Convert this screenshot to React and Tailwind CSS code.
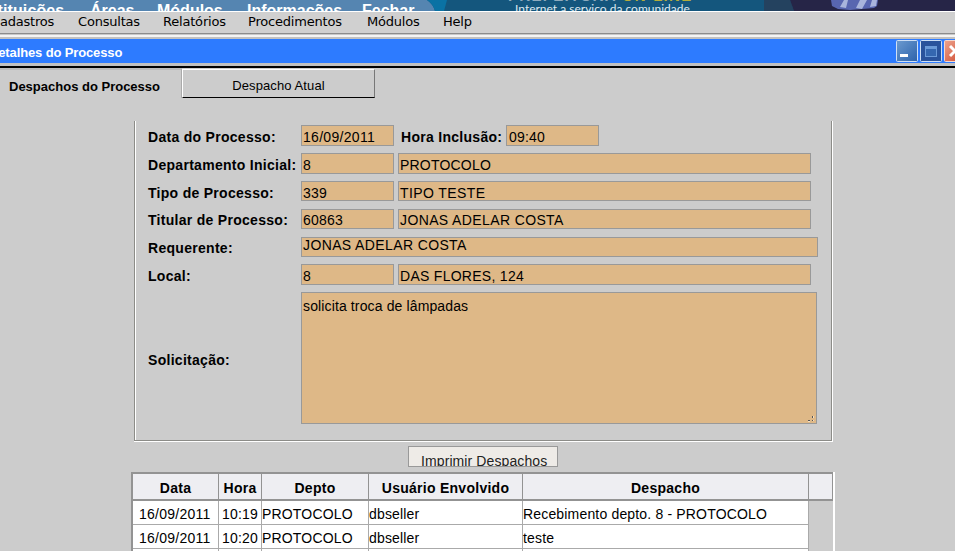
import React from "react";

const banner = [
  ["w-[116px]", "Instituições", "-ml-[26px] tracking-[0.12px]"],
  ["w-[67px]", "Áreas", ""],
  ["w-[90px]", "Módulos", ""],
  ["w-[115px]", "Informações", ""],
  ["w-[80px]", "Fechar", ""],
];

function Field({ children, className = "", tracking = "tracking-[0.2px]" }) {
  return (
    <div className={"shrink-0 overflow-hidden whitespace-nowrap border border-[#999] bg-[#deb887] text-[14px] " + tracking + " " + className}>
      {children}
    </div>
  );
}

function Label({ children, className = "" }) {
  return <div className={"shrink-0 whitespace-nowrap text-[14px] font-bold tracking-[0.29px] " + className}>{children}</div>;
}

function Banner() {
  return (
    <div className="relative h-[11px] overflow-hidden bg-[#12557c]">
      <svg className="absolute inset-0" width="955" height="11" viewBox="0 0 955 11">
        <rect width="955" height="11" fill="#14567d" />
        <path d="M0 0H427Q433 4 435 11H0Z" fill="#5585b1" />
        <path d="M427 0H447L444 11H435Q433 4 427 0Z" fill="#0a72a4" />
        <path d="M764 0H790L794 11H764Z" fill="#24425f" />
        <path d="M790 0H955V11H794Z" fill="#262547" />
        <path d="M831 0H878L877 6L874 8L862 9L850 10L838 9L832 6Z" fill="#5866b0" />
        <path d="M840 7L844 0H848L846 8Z M856 8L860 0H867L862 9Z M870 7L872 0H877L876 6Z" fill="#a9b5dc" />
      </svg>
      <div className="relative flex h-[11px] text-[16px] font-bold leading-[18px] text-white">
        <div className="flex pt-[2px]">
          {banner.map(([w, t, m]) => (
            <div key={t} className={w + " " + m + " shrink-0 whitespace-nowrap"}>{t}</div>
          ))}
        </div>
      </div>
      <div className="absolute left-[508px] top-[-12px] whitespace-nowrap text-[15px] font-bold leading-[15px] tracking-[1.3px] text-[#8fabbd]">
        PREFEITURA <span className="text-[#b5ad3c]">ON-LINE</span>
      </div>
      <div className="absolute left-[515px] top-[2px] whitespace-nowrap font-['Lato'] text-[12px] leading-[14px] text-[#dce8f0]">
        Internet a serviço da comunidade
      </div>
    </div>
  );
}

function WindowButtons() {
  return (
    <svg className="h-6 w-[60px] shrink-0" viewBox="895 39 60 24">
      <defs>
        <linearGradient id="min" x1="0" y1="0" x2="1" y2="1">
          <stop offset="0" stopColor="#6c9bd0" />
          <stop offset="1" stopColor="#2c62ab" />
        </linearGradient>
        <linearGradient id="cls" x1="0" y1="0" x2="1" y2="1">
          <stop offset="0" stopColor="#eda58f" />
          <stop offset="1" stopColor="#cf452a" />
        </linearGradient>
      </defs>
      <rect x="896.5" y="40.5" width="21" height="21" rx="1" fill="url(#min)" stroke="#cfe0f5" />
      <rect x="900" y="54" width="8" height="3" fill="#fff" />
      <rect x="920.5" y="40.5" width="21" height="21" rx="1" fill="#2a539c" stroke="#cfe0f5" />
      <rect x="925.5" y="46.5" width="11" height="10" fill="#3567b0" stroke="#6b9ad8" />
      <rect x="925" y="46" width="12" height="3" fill="#6b9ad8" />
      <rect x="944.5" y="40.5" width="21" height="21" rx="1" fill="url(#cls)" stroke="#f5d8d0" />
      <path d="M950 46L960 56M960 46L950 56" stroke="#fff" strokeWidth="3" />
    </svg>
  );
}

const menu = [
  ["w-[87px]", "Cadastros"],
  ["w-[85px]", "Consultas"],
  ["w-[85px]", "Relatórios"],
  ["w-[119px]", "Procedimentos"],
  ["w-[76px]", "Módulos"],
  ["w-[50px]", "Help"],
];

const rows = [
  ["16/09/2011", "10:19", "PROTOCOLO", "dbseller", "Recebimento depto. 8 - PROTOCOLO"],
  ["16/09/2011", "10:20", "PROTOCOLO", "dbseller", "teste"],
  ["", "", "", "", ""],
];

export default function App() {
  return (
    <div className="h-[551px] w-[955px] overflow-hidden bg-[#ccc] font-['Liberation_Sans',Arial,sans-serif] text-black">
      <Banner />
      <div className="h-[23px] border-b border-t border-b-[#8c8c8c] border-t-white bg-[#d0d0d0]">
        <div className="-ml-[9px] flex font-['DejaVu_Sans',sans-serif] text-[13px] leading-[19px] tracking-[-0.2px]">
          {menu.map(([w, t]) => (
            <div key={t} className={w + " shrink-0 whitespace-nowrap"}>{t}</div>
          ))}
        </div>
      </div>
      <div className="h-px bg-[#c8c8c8]" />
      <div className="h-[2px] bg-[#f4f4f4]" />
      <div className="h-[2px] bg-[#c0c0c0]" />
      <div className="flex h-6 justify-between bg-[#2d7bff]">
        <div className="-ml-[11px] whitespace-nowrap text-[13px] font-bold leading-[27px] tracking-[-0.13px] text-white">Detalhes do Processo</div>
        <WindowButtons />
      </div>
      <div className="h-[3px] bg-[#c0c0c0]" />
      <div className="h-[2px] bg-black" />
      <div className="flex h-[30px]">
        <div className="h-[30px] w-[182px] shrink-0 border-r border-t-2 border-r-[#aaa] border-t-[#bbb] pl-[9px] text-[13px] font-bold leading-[34px]">
          Despachos do Processo
        </div>
        <div className="mt-px h-[29px] w-[193px] border border-b-black border-l-white border-r-[#777] border-t-white text-center text-[13px] leading-[31px] tracking-[0.1px]">
          Despacho Atual
        </div>
      </div>

      <div className="ml-[134px] mt-[23px] flex h-[321px] w-[699px] border-b border-r border-white">
        <div className="flex h-[320px] w-[698px] border-x border-b border-[#8c8c88]">
          <div className="flex h-[319px] w-[696px] flex-col border-l border-white pl-[12px] pt-1">
            <div className="flex h-7 shrink-0">
              <Label className="w-[153px] leading-[25px]">Data do Processo:</Label>
              <Field tracking="tracking-[0.3px]" className="h-[21px] w-[93px] pl-px leading-[23px]">16/09/2011</Field>
              <Label className="ml-[7px] w-[105px] leading-[25px]">Hora Inclusão:</Label>
              <Field className="h-[21px] w-[93px] pl-[2px] leading-[23px]">09:40</Field>
            </div>
            <div className="flex h-7 shrink-0">
              <Label className="w-[153px] leading-[25px]">Departamento Inicial:</Label>
              <Field className="h-[21px] w-[93px] pl-px leading-[23px]">8</Field>
              <Field className="ml-1 h-[21px] w-[413px] pl-px leading-[23px]">PROTOCOLO</Field>
            </div>
            <div className="flex h-7 shrink-0">
              <Label className="w-[153px] leading-[25px]">Tipo de Processo:</Label>
              <Field className="h-[20px] w-[93px] pl-px leading-[23px]">339</Field>
              <Field tracking="tracking-[0.4px]" className="ml-1 h-[20px] w-[413px] pl-px leading-[23px]">TIPO TESTE</Field>
            </div>
            <div className="flex h-7 shrink-0">
              <Label className="w-[153px] leading-[23px]">Titular de Processo:</Label>
              <Field className="h-[20px] w-[93px] pl-px leading-[21px]">60863</Field>
              <Field tracking="tracking-[0.38px]" className="ml-1 h-[20px] w-[413px] pl-px leading-[21px]">JONAS ADELAR COSTA</Field>
            </div>
            <div className="flex h-[27px] shrink-0">
              <Label className="w-[153px] leading-[23px]">Requerente:</Label>
              <Field tracking="tracking-[0.38px]" className="h-[20px] w-[517px] pl-px leading-[15px]">JONAS ADELAR COSTA</Field>
            </div>
            <div className="flex h-7 shrink-0">
              <Label className="w-[153px] leading-[25px]">Local:</Label>
              <Field className="h-[21px] w-[93px] pl-px leading-[23px]">8</Field>
              <Field tracking="tracking-[0.28px]" className="ml-1 h-[21px] w-[413px] pl-px leading-[23px]">DAS FLORES, 124</Field>
            </div>
            <div className="flex h-[132px] shrink-0">
              <Label className="w-[153px] leading-[136px]">Solicitação:</Label>
              <Field tracking="tracking-[0.13px]" className="relative h-[132px] w-[516px] pl-px pt-[5px] leading-[17px]">
                solicita troca de lâmpadas
                <svg className="absolute bottom-px right-px" width="7" height="7" viewBox="0 0 7 7">
                  <path d="M4 1h1v2h-1zM4 5h1v1h-1zM0 5h2v1h-2z" fill="#555" />
                  <path d="M5 1h1v2h-1zM5 5h1v1h-1zM0 6h2v1h-2z" fill="#f3dfc5" />
                </svg>
              </Field>
            </div>
          </div>
        </div>
      </div>

      <div className="ml-[408px] mt-1 h-[21px] w-[150px] overflow-hidden whitespace-nowrap border border-[#999] bg-[#eeebe7] pl-[12px] text-[14px] leading-[28px] tracking-[0.1px] text-[#222]">
        Imprimir Despachos
      </div>

      <div className="ml-[131px] mt-[5px] w-[704px] border-r-2 border-white">
        <div className="h-[79px] w-[702px] overflow-hidden border-l-2 border-t-2 border-[#939393]">
          <div className="flex h-[27px] border-b-2 border-r border-[#939393] bg-[#eeeef2] text-center text-[14px] font-bold leading-[28px] tracking-[0.27px]">
            <div className="w-[86px] border-r border-[#939393]">Data</div>
            <div className="w-[43px] border-r border-[#939393]">Hora</div>
            <div className="w-[107px] border-r border-[#939393]">Depto</div>
            <div className="w-[154px] border-r border-[#939393]">Usuário Envolvido</div>
            <div className="w-[286px] border-r border-[#939393]">Despacho</div>
          </div>
          {rows.map((r, i) => (
            <div key={i} className="flex h-6 whitespace-nowrap text-[14px] leading-[27px] tracking-[0.17px]">
              <div className="w-[86px] border-b border-r border-[#aaa] bg-white pl-[6px] tracking-[0.25px]">{r[0]}</div>
              <div className="w-[43px] border-b border-r border-[#aaa] bg-white pl-[3px]">{r[1]}</div>
              <div className="w-[107px] border-b border-r border-[#aaa] bg-white">{r[2]}</div>
              <div className="w-[154px] border-b border-r border-[#aaa] bg-white">{r[3]}</div>
              <div className="w-[286px] border-b border-r border-[#aaa] bg-white">{r[4]}</div>
            </div>
          ))}
        </div>
      </div>
    </div>
  );
}
